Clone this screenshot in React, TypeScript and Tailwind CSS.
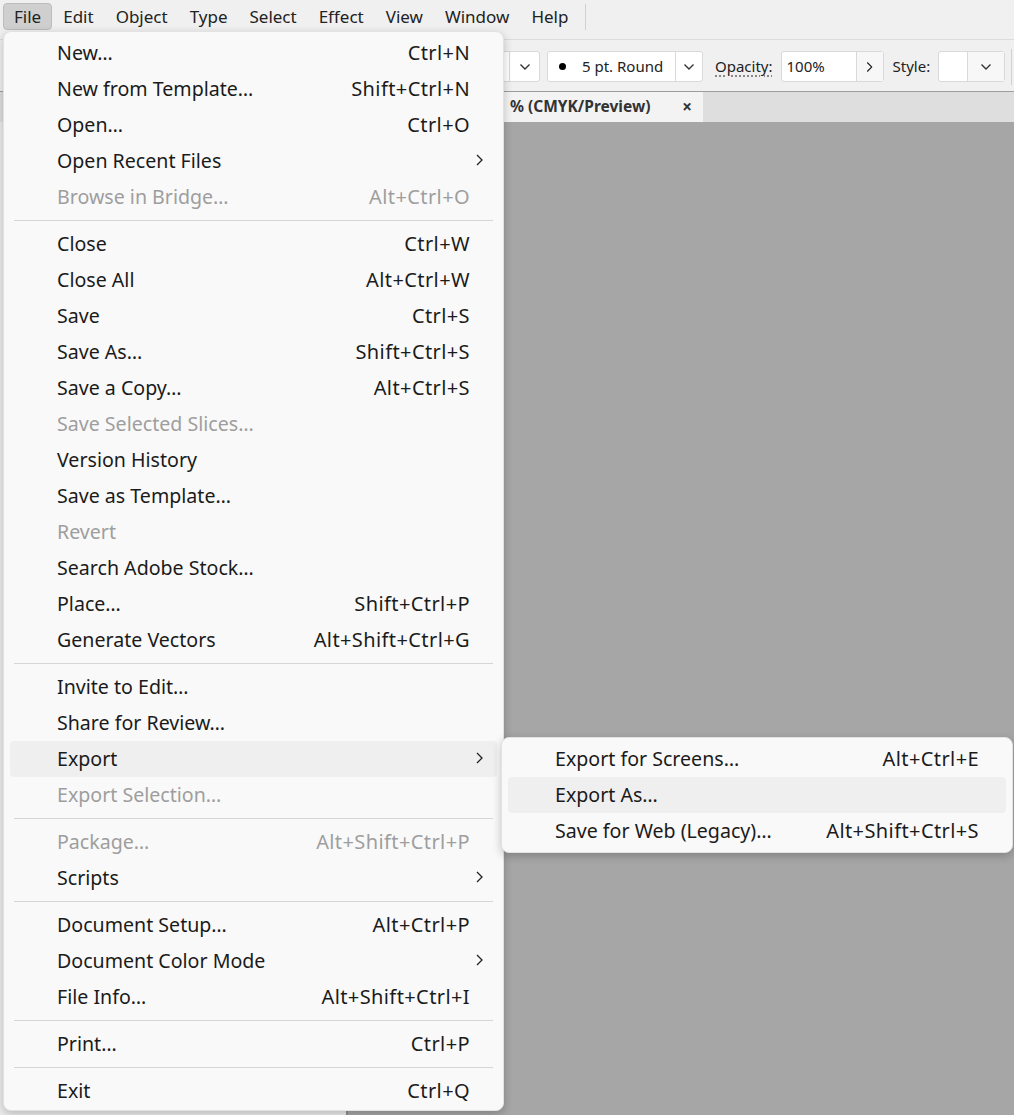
import { Fragment } from "react"

type Item = {
  label: string
  shortcut?: string
  disabled?: boolean
  sub?: boolean
  active?: boolean
}

const groups: Item[][] = [
  [
    { label: "New…", shortcut: "Ctrl+N" },
    { label: "New from Template…", shortcut: "Shift+Ctrl+N" },
    { label: "Open…", shortcut: "Ctrl+O" },
    { label: "Open Recent Files", sub: true },
    { label: "Browse in Bridge…", shortcut: "Alt+Ctrl+O", disabled: true },
  ],
  [
    { label: "Close", shortcut: "Ctrl+W" },
    { label: "Close All", shortcut: "Alt+Ctrl+W" },
    { label: "Save", shortcut: "Ctrl+S" },
    { label: "Save As…", shortcut: "Shift+Ctrl+S" },
    { label: "Save a Copy…", shortcut: "Alt+Ctrl+S" },
    { label: "Save Selected Slices…", disabled: true },
    { label: "Version History" },
    { label: "Save as Template…" },
    { label: "Revert", disabled: true },
    { label: "Search Adobe Stock…" },
    { label: "Place…", shortcut: "Shift+Ctrl+P" },
    { label: "Generate Vectors", shortcut: "Alt+Shift+Ctrl+G" },
  ],
  [
    { label: "Invite to Edit…" },
    { label: "Share for Review…" },
    { label: "Export", sub: true, active: true },
    { label: "Export Selection…", disabled: true },
  ],
  [
    { label: "Package…", shortcut: "Alt+Shift+Ctrl+P", disabled: true },
    { label: "Scripts", sub: true },
  ],
  [
    { label: "Document Setup…", shortcut: "Alt+Ctrl+P" },
    { label: "Document Color Mode", sub: true },
    { label: "File Info…", shortcut: "Alt+Shift+Ctrl+I" },
  ],
  [{ label: "Print…", shortcut: "Ctrl+P" }],
  [{ label: "Exit", shortcut: "Ctrl+Q" }],
]

const exportItems: Item[] = [
  { label: "Export for Screens…", shortcut: "Alt+Ctrl+E" },
  { label: "Export As…", active: true },
  { label: "Save for Web (Legacy)…", shortcut: "Alt+Shift+Ctrl+S" },
]

const menuBar = ["File", "Edit", "Object", "Type", "Select", "Effect", "View", "Window", "Help"]

function Chevron({ dir = "right", className = "" }: { dir?: "right" | "down"; className?: string }) {
  if (dir === "down") {
    return (
      <svg width="12" height="8" viewBox="0 0 12 8" className={className}>
        <polyline points="1.5,1.5 6,6 10.5,1.5" fill="none" stroke="#333" strokeWidth="1.4" />
      </svg>
    )
  }
  return (
    <svg width="7" height="12" viewBox="0 0 7 12" className={className}>
      <polyline points="1,1 6,6 1,11" fill="none" stroke="#222" strokeWidth="1.3" />
    </svg>
  )
}

function MenuRow({ item }: { item: Item }) {
  return (
    <div className="relative h-9 px-[6px]">
      <div
        className={`flex h-full items-center rounded-[4px] pl-[47px] pr-[27px] ${
          item.active ? "bg-[#efefef]" : ""
        } ${item.disabled ? "text-[#9e9e9e]" : "text-[#1b1b1b]"}`}
      >
        <span className="flex-1 whitespace-nowrap text-[19.6px]">{item.label}</span>
        {item.shortcut && (
          <span className="whitespace-nowrap text-[20px] tracking-[0.4px]">{item.shortcut}</span>
        )}
      </div>
      {item.sub && <Chevron className="absolute right-[20px] top-[11px]" />}
    </div>
  )
}

export default function App() {
  return (
    <div className="relative flex h-[1115px] w-[1014px] flex-col overflow-hidden bg-[#f0f0f0] font-['Noto_Sans',sans-serif]">
      {/* menu bar */}
      <div className="flex h-10 shrink-0 items-center border-b border-[#dcdcdc] pl-[3px] text-[17px] text-[#222]">
        {menuBar.map((m, i) => (
          <div
            key={m}
            className={`mb-[6px] flex h-[27px] items-center rounded-[4px] border px-[10px] ${
              i === 0 ? "border-[#bdbdbd] bg-[#cfcfcf]" : "border-transparent"
            }`}
          >
            {m}
          </div>
        ))}
        <div className="mb-[6px] ml-[6px] h-[26px] w-px bg-[#d0d0d0]" />
      </div>

      {/* control bar */}
      <div className="flex h-[52px] shrink-0 items-center border-b border-[#9d9d9d] pl-[440px] pt-[2px] text-[15px] text-[#222]">
        <div className="flex h-[31px] w-[100px] shrink-0 rounded-[3px] border border-[#d9d9d9] bg-white">
          <div className="flex-1" />
          <div className="flex w-[30px] items-center justify-center border-l border-[#d9d9d9]">
            <Chevron dir="down" />
          </div>
        </div>
        <div className="ml-[7px] flex h-[31px] w-[156px] shrink-0 rounded-[3px] border border-[#d9d9d9] bg-white">
          <div className="flex flex-1 items-center pl-[11px]">
            <span className="h-[7px] w-[7px] rounded-full bg-black" />
            <span className="ml-[16px]">5 pt. Round</span>
          </div>
          <div className="flex w-[27px] items-center justify-center border-l border-[#d9d9d9]">
            <Chevron dir="down" />
          </div>
        </div>
        <span className="ml-[12px] shrink-0 underline decoration-dotted decoration-[#666] underline-offset-[3px]">
          Opacity:
        </span>
        <div className="ml-[8px] flex h-[31px] w-[103px] shrink-0 rounded-[3px] border border-[#d9d9d9] bg-white">
          <div className="flex flex-1 items-center pl-[5px]">100%</div>
          <div className="flex w-[27px] items-center justify-center border-l border-[#d9d9d9] bg-[#f7f7f7]">
            <Chevron className="scale-90" />
          </div>
        </div>
        <span className="ml-[9px] shrink-0">Style:</span>
        <div className="ml-[8px] flex h-[31px] w-[67px] shrink-0 rounded-[3px] border border-[#d9d9d9] bg-white">
          <div className="flex-1" />
          <div className="flex w-[37px] items-center justify-center border-l border-[#d9d9d9] bg-[#f7f7f7]">
            <Chevron dir="down" />
          </div>
        </div>
        <div className="ml-[6px] h-[36px] w-px shrink-0 bg-[#d0d0d0]" />
        <div className="ml-[3px] h-[31px] w-[10px] shrink-0 rounded-l-[3px] border border-[#aaa] bg-[#e8e8e8]" />
      </div>

      {/* tab bar */}
      <div className="flex h-[30px] shrink-0 items-stretch bg-[#dedede]">
        <div className="ml-[300px] flex w-[403px] items-center bg-[#f3f3f3] pr-[11px] text-[15.5px] font-bold text-[#333]">
          <span className="flex-1 pl-[210px]">% (CMYK/Preview)</span>
          <span className="text-[17px] font-bold">×</span>
        </div>
      </div>

      {/* workspace */}
      <div className="flex flex-1">
        <div className="w-[348px] border-r-2 border-[#8f8f8f] bg-[#ececec]" />
        <div className="flex-1 bg-[#a6a6a6]" />
      </div>

      {/* File menu */}
      <div className="absolute left-[3px] top-[31px] w-[501px] rounded-[8px] border border-[#e2e2e2] bg-[#f9f9f9] pb-[1px] pt-[3px] shadow-[0_3px_10px_rgba(0,0,0,0.22)]">
        {groups.map((g, gi) => (
          <Fragment key={gi}>
            {gi > 0 && <div className="mx-[10px] my-[5px] h-px bg-[#d6d6d6]" />}
            {g.map((it) => (
              <MenuRow key={it.label} item={it} />
            ))}
          </Fragment>
        ))}
      </div>

      {/* Export submenu */}
      <div className="absolute left-[501px] top-[737px] w-[512px] rounded-[8px] border border-[#e2e2e2] bg-[#f9f9f9] py-[3px] shadow-[0_3px_10px_rgba(0,0,0,0.22)]">
        {exportItems.map((it) => (
          <MenuRow key={it.label} item={it} />
        ))}
      </div>
    </div>
  )
}
